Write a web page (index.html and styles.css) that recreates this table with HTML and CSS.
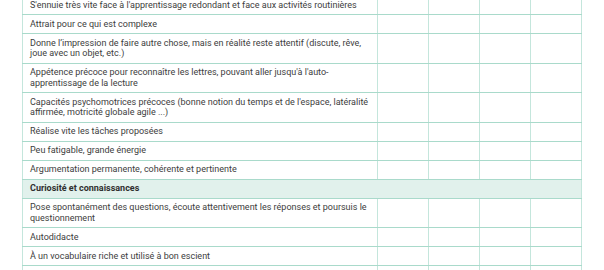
FILE: index.html
```html
<!DOCTYPE html>
<html lang="fr">
<head>
<meta charset="utf-8">
<link rel="stylesheet" href="styles.css">
</head>
<body>
<table class="grid">
  <colgroup>
    <col class="c-label">
    <col class="c-box"><col class="c-box"><col class="c-box"><col class="c-box">
  </colgroup>
  <tbody>
    <tr><td>S'ennuie très vite face à l'apprentissage redondant et face aux activités routinières</td><td></td><td></td><td></td><td></td></tr>
    <tr><td>Attrait pour ce qui est complexe</td><td></td><td></td><td></td><td></td></tr>
    <tr><td>Donne l’impression de faire autre chose, mais en réalité reste attentif (discute, rêve, joue avec un objet, etc.)</td><td></td><td></td><td></td><td></td></tr>
    <tr><td>Appétence précoce pour reconnaître les lettres, pouvant aller jusqu'à l'auto-apprentissage de la lecture</td><td></td><td></td><td></td><td></td></tr>
    <tr><td>Capacités psychomotrices précoces (bonne notion du temps et de l'espace, latéralité affirmée, motricité globale agile ...)</td><td></td><td></td><td></td><td></td></tr>
    <tr><td>Réalise vite les tâches proposées</td><td></td><td></td><td></td><td></td></tr>
    <tr><td>Peu fatigable, grande énergie</td><td></td><td></td><td></td><td></td></tr>
    <tr><td>Argumentation permanente, cohérente et pertinente</td><td></td><td></td><td></td><td></td></tr>
    <tr class="section"><td colspan="5">Curiosité et connaissances</td></tr>
    <tr><td>Pose spontanément des questions, écoute attentivement les réponses et poursuis le questionnement</td><td></td><td></td><td></td><td></td></tr>
    <tr><td>Autodidacte</td><td></td><td></td><td></td><td></td></tr>
    <tr><td>À un vocabulaire riche et utilisé à bon escient</td><td></td><td></td><td></td><td></td></tr>
    <tr><td>&nbsp;</td><td></td><td></td><td></td><td></td></tr>
  </tbody>
</table>
</body>
</html>
```
FILE: styles.css
```css
html, body {
  margin: 0;
  padding: 0;
  background: #ffffff;
}
body {
  font-family: Roboto, "Liberation Sans", sans-serif;
  font-size: 9px;
  color: #3d3d3d;
  overflow: hidden;
}
.grid {
  border-collapse: collapse;
  table-layout: fixed;
  width: 560px;
  margin: -5px 0 0 22px;
}
.c-label { width: 355px; }
.c-box { width: 51px; }
.grid td {
  border-top: 1px solid #a9dacb;
  border-bottom: 1px solid #a9dacb;
  border-left: 1px solid #c4e6dc;
  border-right: 1px solid #c4e6dc;
  padding: 3.5px 4px 4px 7px;
  line-height: 10.5px;
  vertical-align: middle;
}
.section td {
  background: #e1f1ec;
  font-weight: 700;
  color: #2f2f2f;
}
```
